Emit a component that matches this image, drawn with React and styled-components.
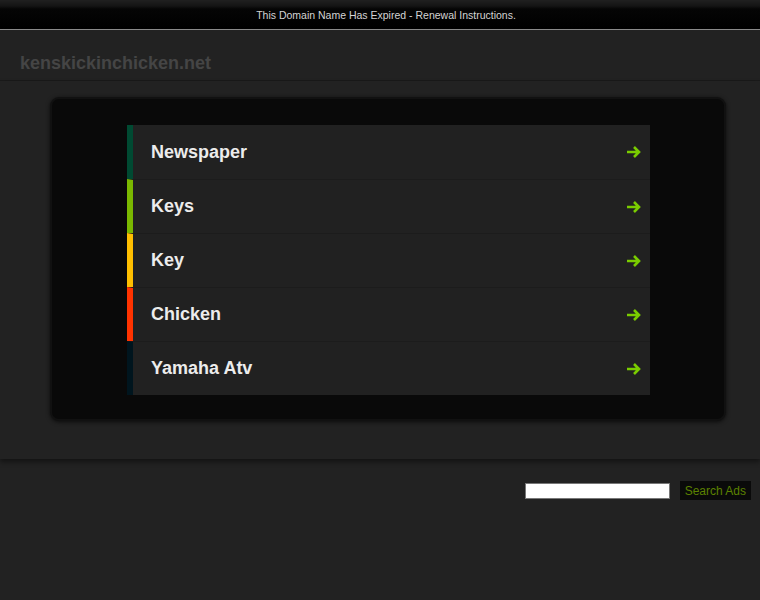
import React from 'react';
import styled, {createGlobalStyle} from 'styled-components';

const GlobalStyle = createGlobalStyle`
  html, body {
    margin: 0;
    padding: 0;
    background: #222222;
    font-family: "Liberation Sans", Arial, sans-serif;
  }
`;

const TopBar = styled.div`
  height: 29px;
  background: linear-gradient(to bottom, #202020 0px, #141414 6px, #050505 9px, #000000 29px);
  border-bottom: 1px solid #8a8a8a;
  display: flex;
  align-items: center;
  justify-content: center;
  padding-left: 12px;
  box-sizing: content-box;
  color: #d4d4d4;
  font-size: 10.5px;
`;

const Header = styled.div`
  height: 51px;
  background: #222222;
  border-bottom: 1px solid #1a1a1a;
  display: flex;
  align-items: flex-end;
  padding: 0 0 6px 20px;
  box-sizing: border-box;
`;

const DomainName = styled.h1`
  margin: 0;
  font-size: 18px;
  font-weight: bold;
  color: #454545;
`;

const Main = styled.div`
  background: #222222;
  padding: 16px 34px 38px 50px;
  box-shadow: 0 3px 5px rgba(0, 0, 0, 0.45);
  position: relative;
`;

const Panel = styled.div`
  width: 676px;
  height: 324px;
  box-sizing: border-box;
  background: #090909;
  border: 2px solid #111111;
  border-radius: 9px;
  box-shadow: 0 1px 4px rgba(0, 0, 0, 0.7);
  padding: 26px 0 0 75px;
`;

const List = styled.ul`
  list-style: none;
  margin: 0;
  padding: 0;
  width: 523px;
`;

const Row = styled.li`
  display: flex;
  align-items: center;
  height: 54px;
  box-sizing: border-box;
  background: #212121;
  border-left: 6px solid ${props => props.stripe};
  border-top: ${props => (props.first ? 'none' : '1px solid #1c1c1c')};
  padding: 0 8px 0 18px;
`;

const Label = styled.span`
  flex: 1;
  font-size: 18px;
  font-weight: bold;
  color: #ececec;
`;

const Arrow = () => (
  <svg width="16" height="14" viewBox="0 0 16 14">
    <path
      d="M1 7 H13 M8 2 L13 7 L8 12"
      stroke="#7acc00"
      strokeWidth="2.6"
      fill="none"
      strokeLinecap="butt"
      strokeLinejoin="miter"
    />
  </svg>
);

const SearchRow = styled.div`
  display: flex;
  justify-content: flex-end;
  align-items: center;
  gap: 10px;
  padding: 22px 9px 0 0;
`;

const SearchInput = styled.input`
  width: 145px;
  height: 16px;
  box-sizing: border-box;
  border: 1px solid #777;
  background: #ffffff;
  margin: 0;
  padding: 0;
`;

const SearchButton = styled.button`
  height: 19px;
  background: #0a0a0a;
  border: none;
  color: #5c8200;
  font-family: "Liberation Sans", Arial, sans-serif;
  font-size: 12px;
  padding: 0 5px;
  margin: 0;
`;

const items = [
  {label: 'Newspaper', stripe: '#004a32'},
  {label: 'Keys', stripe: '#7ab800'},
  {label: 'Key', stripe: '#ffbf00'},
  {label: 'Chicken', stripe: '#ff3300'},
  {label: 'Yamaha Atv', stripe: '#00151e'},
];

const App = () => (
  <>
    <GlobalStyle/>
    <TopBar>This Domain Name Has Expired - Renewal Instructions.</TopBar>
    <Header>
      <DomainName>kenskickinchicken.net</DomainName>
    </Header>
    <Main>
      <Panel>
        <List>
          {items.map((item, i) => (
            <Row key={item.label} stripe={item.stripe} first={i === 0}>
              <Label>{item.label}</Label>
              <Arrow/>
            </Row>
          ))}
        </List>
      </Panel>
    </Main>
    <SearchRow>
      <SearchInput type="text"/>
      <SearchButton>Search Ads</SearchButton>
    </SearchRow>
  </>
);

export default App;
